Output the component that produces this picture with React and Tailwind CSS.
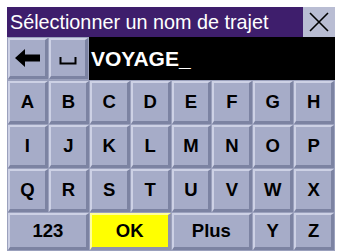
const rows = [
  ['A', 'B', 'C', 'D', 'E', 'F', 'G', 'H'],
  ['I', 'J', 'K', 'L', 'M', 'N', 'O', 'P'],
  ['Q', 'R', 'S', 'T', 'U', 'V', 'W', 'X'],
];

function Key({ children, wide, yellow, className = '' }) {
  return (
    <div
      className={`${wide ? 'col-span-2' : ''} flex items-center justify-center border-t-2 border-l-2 border-b-[3px] border-r-[3px] ${
        yellow
          ? 'bg-[#ffff00] border-t-[#ffff9a] border-l-[#ffff9a] border-b-[#8f93ad] border-r-[#8f93ad]'
          : 'bg-[#a6acc8] border-t-[#cdd1e5] border-l-[#cdd1e5] border-b-[#7c83a2] border-r-[#7c83a2]'
      } ${className}`}
    >
      {children}
    </div>
  );
}

export default function App() {
  return (
    <div
      className="w-[337px] h-[251px] bg-white pl-[7px] pt-[7px] pr-[2px] overflow-hidden"
      style={{ fontFamily: '"Liberation Sans", Arial, sans-serif' }}
    >
      {/* Title bar */}
      <div className="flex h-[30px]">
        <div className="flex-1 bg-[#3e1e6c] text-white text-[19.8px] leading-[30px] pl-[3px] whitespace-nowrap">
          Sélectionner un nom de trajet
        </div>
        <div className="w-[32px] bg-[#b9bdd3] flex items-center justify-center">
          <svg width="22" height="22" viewBox="0 0 22 22">
            <path d="M2 2 L20 20 M20 2 L2 20" stroke="#000" strokeWidth="1.6" fill="none" />
          </svg>
        </div>
      </div>

      {/* Input row */}
      <div className="flex h-[43px] bg-black">
        <div className="grid grid-cols-2 w-[82px] gap-px bg-[#9ba1bd] p-px">
          <Key>
            <svg width="25" height="18" viewBox="0 0 25 18">
              <path d="M0 9 L10 0 L10 5.5 L25 5.5 L25 12.5 L10 12.5 L10 18 Z" fill="#000" />
            </svg>
          </Key>
          <Key>
            <svg width="18" height="10" viewBox="0 0 18 10" className="mt-[6px]">
              <path d="M1.5 1 L1.5 7.5 L16.5 7.5 L16.5 1" stroke="#000" strokeWidth="2" fill="none" />
            </svg>
          </Key>
        </div>
        <div className="flex items-center pl-[2px] text-white font-bold text-[21px]">
          VOYAGE_
        </div>
      </div>

      {/* Keyboard */}
      <div className="grid grid-cols-8 grid-rows-[43px_43px_43px_1fr] h-[171px] gap-px bg-[#9ba1bd] p-px text-black font-bold text-[18.5px]">
        {rows.flat().map((k) => (
          <Key key={k}>{k}</Key>
        ))}
        <Key wide>123</Key>
        <Key wide yellow>OK</Key>
        <Key wide>Plus</Key>
        <Key>Y</Key>
        <Key>Z</Key>
      </div>
    </div>
  );
}
